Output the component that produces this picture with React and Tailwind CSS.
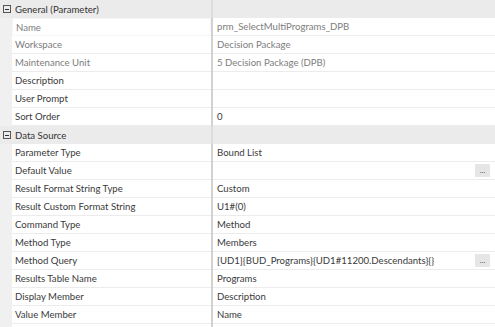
const sections = [
  {
    title: "General (Parameter)",
    rows: [
      { label: "Name", value: "prm_SelectMultiPrograms_DPB", dim: true, focus: true },
      { label: "Workspace", value: "Decision Package", dim: true },
      { label: "Maintenance Unit", value: "5 Decision Package (DPB)", dim: true },
      { label: "Description", value: "" },
      { label: "User Prompt", value: "" },
      { label: "Sort Order", value: "0" },
    ],
  },
  {
    title: "Data Source",
    rows: [
      { label: "Parameter Type", value: "Bound List" },
      { label: "Default Value", value: "", button: true },
      { label: "Result Format String Type", value: "Custom" },
      { label: "Result Custom Format String", value: "U1#(0)" },
      { label: "Command Type", value: "Method" },
      { label: "Method Type", value: "Members" },
      { label: "Method Query", value: "[UD1]{BUD_Programs}{UD1#11200.Descendants}{}", button: true },
      { label: "Results Table Name", value: "Programs" },
      { label: "Display Member", value: "Description" },
      { label: "Value Member", value: "Name" },
    ],
  },
];

const Header = ({ title }) => (
  <div className="flex h-[18px] bg-[#ebebeb]">
    <div className="w-[211px] flex items-center">
      <span className="ml-[3px] w-[8px] h-[8px] border border-[#555] flex items-center justify-center">
        <span className="w-[4px] h-px bg-[#333]" />
      </span>
      <span className="ml-[4px] text-[#333] leading-[17px]">{title}</span>
    </div>
    <div className="w-[2px] bg-[#dcdcdc]" />
    <div className="flex-1" />
  </div>
);

const Row = ({ label, value, dim, focus, button }) => (
  <div className="flex h-[18px]">
    <div className="w-[12px] bg-[#f0f0f0]" />
    <div
      className={
        "w-[199px] flex items-center pl-[3px] border-b border-[#ececec] leading-[17px] " +
        (focus ? "border border-dotted border-[#444] " : "") +
        (dim ? "text-[#7d7d7d]" : "text-[#3a3a3a]")
      }
    >
      {label}
    </div>
    <div className="w-[2px] bg-[#d2d2d2]" />
    <div
      className={
        "flex-1 flex items-center pl-[4px] pr-[5px] border-b border-[#ececec] " +
        (dim ? "text-[#7d7d7d]" : "text-[#3a3a3a]")
      }
    >
      <span className="flex-1 whitespace-nowrap leading-[17px]">{value}</span>
      {button && (
        <span className="w-[15px] h-[13px] bg-[#e6e6e6] text-[8px] leading-none flex items-end justify-center pb-[3px] text-[#555]">
          ...
        </span>
      )}
    </div>
  </div>
);

export default function App() {
  return (
    <div
      className="w-[495px] h-[327px] bg-white overflow-hidden text-[9.6px]"
      style={{ fontFamily: 'Lato, "Noto Sans", sans-serif' }}
    >
      {sections.map((s) => (
        <div key={s.title}>
          <Header title={s.title} />
          {s.rows.map((r) => (
            <Row key={r.label} {...r} />
          ))}
        </div>
      ))}
      <div className="flex h-[3px]">
        <div className="w-[12px] bg-[#f0f0f0]" />
        <div className="w-[199px]" />
        <div className="w-[2px] bg-[#d2d2d2]" />
      </div>
    </div>
  );
}
